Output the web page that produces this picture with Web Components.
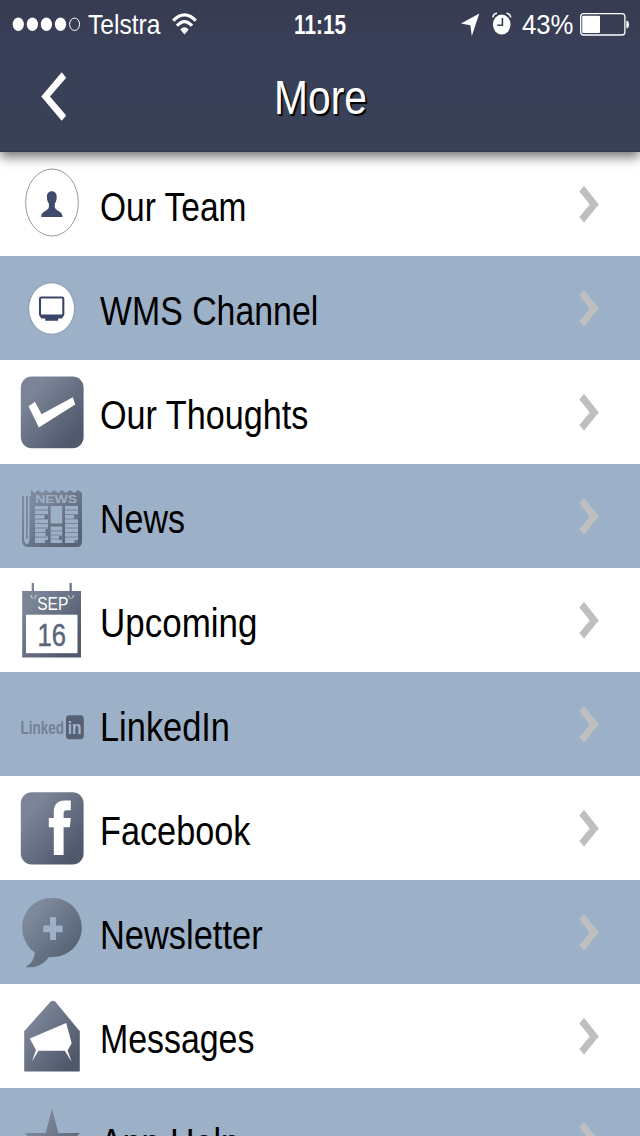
<!DOCTYPE html>
<html lang="en">
<head>
<meta charset="utf-8">
<title>More</title>
<style>
    body{
        margin: 0;
        background-color: white;
        font-family: "Liberation Sans", Arial, sans-serif;
    }
</style>
</head>
<body>
<more-screen></more-screen>

<script>
function makeTemplate(html){
    const template = document.createElement("template");
    template.innerHTML = html;
    return template;
}

// Squeezes its text horizontally into the given width
class FitText extends HTMLElement {
    static template = makeTemplate(`
        <style>
            :host{
                display: block;
                flex: none;
                white-space: nowrap;
            }

            span{
                display: inline-block;
                transform-origin: 0 50%;
            }
        </style>
        <span><slot></slot></span>
    `)

    constructor(){
        super();
        const shadow = this.attachShadow({mode: "open"});
        shadow.append(FitText.template.content.cloneNode(true));
        this.span = shadow.querySelector("span");
    }

    connectedCallback() {
        const width = Number(this.getAttribute("width"));
        const natural = this.span.getBoundingClientRect().width;
        this.style.width = width + "px";
        this.span.style.transform = `scaleX(${width / natural})`;
    }
}


class StatusBar extends HTMLElement {
    static template = makeTemplate(`
        <style>
            :host{
                display: grid;
                grid-template-columns: 1fr auto 1fr;
                height: 48px;
                line-height: 49px;
                font-size: 28.5px;
                color: white;
            }

            .group{
                display: flex;
            }

            .right{
                justify-content: flex-end;
            }

            .time{
                font-weight: bold;
                font-size: 27.5px;
            }

            svg{
                display: block;
                flex: none;
            }
        </style>
        <div class="group">
            <svg width="87.5" height="48" viewBox="0 0 87.5 48" fill="white">
                <ellipse cx="18.3" cy="24.3" rx="5.6" ry="6.8"/>
                <ellipse cx="32.4" cy="24.3" rx="5.6" ry="6.8"/>
                <ellipse cx="46.4" cy="24.3" rx="5.6" ry="6.8"/>
                <ellipse cx="60.5" cy="24.3" rx="5.6" ry="6.8"/>
                <ellipse cx="74.6" cy="24.3" rx="5" ry="6.2" fill="none" stroke="white" stroke-width="1"/>
            </svg>
            <fit-text width="72.5">Telstra</fit-text>
            <svg width="40" height="48" viewBox="160 0 40 48">
                <g fill="none" stroke="white" stroke-width="3.2">
                    <path d="M173.2 20.6Q184.5 9.2 195.8 20.6"/>
                    <path d="M177 25.8Q184.5 17.4 192 25.8"/>
                </g>
                <path d="M180.3 29.6Q184.5 25 188.7 29.6L184.5 34.6Z" fill="white"/>
            </svg>
        </div>
        <fit-text class="time" width="52">11:15</fit-text>
        <div class="group right">
            <svg width="62" height="48" viewBox="459 0 62 48">
                <path d="M478.3 13.5L470.8 36L469.3 25.3L460 23.6Z" fill="white"/>
                <ellipse cx="500.7" cy="24.6" rx="8.8" ry="10" fill="white"/>
                <path d="M491.8 17.3Q492.5 13.5 496 13.2M505.4 13.2Q509 13.5 509.8 17.3" fill="none" stroke="white" stroke-width="1.5"/>
                <path d="M501.4 18V25.2H496.3" fill="none" stroke="#394059" stroke-width="1.6"/>
            </svg>
            <fit-text width="51.5">43%</fit-text>
            <svg width="67" height="48" viewBox="573 0 67 48">
                <rect x="580.7" y="13.7" width="44.2" height="21.3" rx="3" fill="none" stroke="white" stroke-width="1.3"/>
                <rect x="582.2" y="15.7" width="17.8" height="17.4" rx="1" fill="white"/>
                <path d="M626.4 20.4Q629 21 629 24.4T626.4 28.4Z" fill="white"/>
            </svg>
        </div>
    `)

    constructor(){
        super();
        const shadow = this.attachShadow({mode: "open"});
        shadow.append(StatusBar.template.content.cloneNode(true));
    }
}


class NavHeader extends HTMLElement {
    static template = makeTemplate(`
        <style>
            :host{
                display: block;
                position: relative;
                z-index: 1;
                flex: none;
                height: 151.6px;
                box-sizing: border-box;
                border-bottom: 1px solid #34384c;
                background: linear-gradient(#373b51, #394159 40%, #394157);
                box-shadow: 0 5px 11px rgba(0, 0, 0, .55);
            }

            .bar{
                display: grid;
                grid-template-columns: 1fr auto 1fr;
                height: 98px;
                line-height: 98px;
                font-size: 49px;
                color: white;
                text-shadow: 2px 2px 1px black;
            }

            svg{
                display: block;
            }
        </style>
        <status-bar></status-bar>
        <div class="bar">
            <svg width="80" height="98" viewBox="0 48 80 98">
                <path d="M61.7 72.3L66.2 77.8L50 96.6L66.2 115.4L61.7 120.8L41.3 96.6Z" fill="white"/>
            </svg>
            <fit-text width="93"><slot></slot></fit-text>
        </div>
    `)

    constructor(){
        super();
        const shadow = this.attachShadow({mode: "open"});
        shadow.append(NavHeader.template.content.cloneNode(true));
    }
}


const icons = {
    team: `
        <ellipse cx="52" cy="50.5" rx="26.4" ry="33.5" fill="white" stroke="#8a8b98" stroke-width=".9"/>
        <path d="M51.8 39.2C48.6 39.2 46.6 41.8 46.9 45.6C47.1 48.3 47.8 50.3 48.9 51.6V55.2C48 59.3 41.2 58.5 41.2 65H62.6C62.6 58.5 55.6 59.3 54.8 55.2V51.6C55.9 50.3 56.5 48.3 56.7 45.6C57 41.8 55 39.2 51.8 39.2Z" fill="#3f4a6c"/>`,
    channel: `
        <ellipse cx="51.6" cy="52.5" rx="22.9" ry="25.7" fill="white" stroke="#71819a" stroke-width=".7"/>
        <rect x="40" y="41.5" width="23.3" height="18" rx="1.2" fill="none" stroke="#3b4568" stroke-width="2.1"/>
        <path d="M39.6 59.5H63.7L62 62.6H58.2V64.7H45.2V62.6H41.2Z" fill="#3b4568"/>`,
    thoughts: `
        <rect x="20.8" y="16.6" width="62.8" height="71.6" rx="11" fill="url(#steel)"/>
        <path d="M28.6 46.2L35 41.8L41.5 54.2L72.8 37.2L75.2 44.4L38.8 67.6Z" fill="white"/>`,
    news: `
        <g opacity=".88">
            <path d="M31 26L34.6 29L38 26L42 29L46 26L50 29L54 26L58 29L62 26L66 29L70 26L74 29L78 26L82 29V77Q82 83 77 83H28Q22 83 22 76V32H24V75Q24.5 80 27 80T29.5 75V32H31Z" fill="url(#steel)"/>
            <path d="M26.9 32V75" stroke="#687891" stroke-width="1.5"/>
            <g fill="#9db0c7">
                <path d="M35 42H48V79H35ZM50.7 42H62.2V59.5H50.7ZM50.7 62.5H62.2V79H50.7ZM65 42H78V79H65Z"/>
                <text x="35.2" y="39.4" font-size="11.5" font-weight="bold" textLength="42" lengthAdjust="spacingAndGlyphs">NEWS</text>
            </g>
            <path d="M35 46H48M35 50.5H48M35 55H48M35 59.5H48M35 64H48M35 68.5H48M35 73H48M50.7 67H62.2M50.7 71H62.2M50.7 75H62.2M65 46H78M65 50.5H78M65 55H78M65 59.5H78M65 64H78M65 68.5H78M65 73H78" stroke="#71819a" stroke-width="1"/>
            <path d="M44.5 51H48V55H44.5ZM45.5 65H48V72H45.5ZM59 72H62.2V76H59ZM74 51H78V55H74ZM74.5 76H78V79H74.5ZM45 76H48V79H45Z" fill="#5f6c82"/>
        </g>`,
    upcoming: `
        <path d="M31.7 15H34V23H69.5V15H71.8V23H81V89.5H22.2V23H31.7Z" fill="url(#steel)"/>
        <rect x="26" y="46.7" width="51.5" height="38.5" fill="white"/>
        <path d="M31 27Q31 30 33 30.5M36 27Q36 30 34 30.5M68.5 27Q68.5 30 70.5 30.5M73.5 27Q73.5 30 71.5 30.5" fill="none" stroke="#d5dae2" stroke-width="1"/>
        <text x="37.3" y="42.3" font-size="18.5" fill="white" textLength="31" lengthAdjust="spacingAndGlyphs">SEP</text>
        <text x="37.5" y="78.3" font-size="32" fill="#5a6579" stroke="#5a6579" stroke-width=".5" textLength="28.5" lengthAdjust="spacingAndGlyphs">16</text>`,
    linkedin: `
        <text transform="translate(20.6 62) scale(.73 1)" font-size="18.5" font-weight="bold" fill="#758196">Linked</text>
        <rect x="66" y="43.3" width="17.8" height="24" rx="3.5" fill="#566176"/>
        <text transform="translate(67.8 62.3) scale(.82 1)" font-size="19" font-weight="bold" fill="#a3b3c9">in</text>`,
    facebook: `
        <rect x="20.8" y="16.2" width="62.8" height="72.4" rx="11" fill="url(#steel)"/>
        <path d="M53.8 79V51.2H48.8V42H53.8V36C53.8 28.5 57.5 24.6 64.5 24.6H70.8V34.2H66.7C64.5 34.2 63.6 35.2 63.6 37.5V42H70.8L69.8 51.2H63.6V79Z" fill="white"/>`,
    newsletter: `
        <path d="M52 18C69 18 81.8 31 81.8 47.5C81.8 64 69 77 52 77H49C44 84 37 88 26.3 87.3C25.8 86.6 26.5 86 28 85.3C32 82.6 34.3 78 34.8 72.5C27 67 22.2 58 22.2 47.5C22.2 31 35 18 52 18Z" fill="url(#steel)" opacity=".92"/>
        <path d="M50 37H56V45.5H62.6V52.3H56V60H50V52.3H43.3V45.5H50Z" fill="#9db0c7"/>`,
    messages: `
        <path d="M50.5 17.7Q53 16 55.4 17.7L79.8 47.2V87.6H24.2V47.2Z" fill="url(#steel)"/>
        <path d="M29.8 54.5L66.2 39L71.7 59.2L67.6 66.5L71.5 77.5L64.8 66.7H38.5L32 77.5L36 66Z" fill="white"/>`,
    star: `
        <path d="M52 20.5L58.3 45H80L64 61L70 88L52 72L34 88L40 61L24.5 45H45.7Z" fill="url(#steel)" opacity=".92"/>`
};


class MenuRow extends HTMLElement {
    constructor(){
        super();
        this.attachShadow({mode: "open"});
    }

    connectedCallback() {
        const icon = icons[this.getAttribute("icon")];
        const width = this.getAttribute("text-width");
        this.shadowRoot.append(makeTemplate(`
            <style>
                :host{
                    display: flex;
                    height: 104.1px;
                    background-color: var(--row-color, white);
                }

                svg{
                    display: block;
                    flex: none;
                }

                fit-text{
                    box-sizing: border-box;
                    height: 104px;
                    padding-top: 3px;
                    line-height: 104px;
                    font-size: 40.7px;
                    color: black;
                }

                .arrow{
                    margin-left: auto;
                }
            </style>
            <svg width="100.2" height="104" viewBox="0 0 100.2 104">
                <defs>
                    <linearGradient id="steel" x1="0" y1="0" x2="1" y2="1">
                        <stop offset=".2" stop-color="#7b8597"/>
                        <stop offset=".85" stop-color="#4f596b"/>
                    </linearGradient>
                </defs>
                ${icon}
            </svg>
            <fit-text width="${width}"><slot></slot></fit-text>
            <svg class="arrow" width="70" height="104" viewBox="570 0 70 104">
                <path d="M584 33.8L579.3 39.5L589.8 52.5L579.3 65L584 70.6L598.8 52.5Z" fill="#bfbfbf"/>
            </svg>
        `).content);
    }
}


class MoreScreen extends HTMLElement {
    static template = makeTemplate(`
        <style>
            :host{
                display: flex;
                flex-direction: column;
                height: 1136px;
                overflow: hidden;
            }

            menu-row:nth-of-type(even){
                --row-color: #9cb0c7;
            }
        </style>
        <nav-header>More</nav-header>
        <main>
            <menu-row icon="team" text-width="146.5">Our Team</menu-row>
            <menu-row icon="channel" text-width="218.3">WMS Channel</menu-row>
            <menu-row icon="thoughts" text-width="208.4">Our Thoughts</menu-row>
            <menu-row icon="news" text-width="85">News</menu-row>
            <menu-row icon="upcoming" text-width="157.5">Upcoming</menu-row>
            <menu-row icon="linkedin" text-width="130">LinkedIn</menu-row>
            <menu-row icon="facebook" text-width="150.4">Facebook</menu-row>
            <menu-row icon="newsletter" text-width="162.6">Newsletter</menu-row>
            <menu-row icon="messages" text-width="154.4">Messages</menu-row>
            <menu-row icon="star" text-width="140">App Help</menu-row>
        </main>
    `)

    constructor(){
        super();
        const shadow = this.attachShadow({mode: "open"});
        shadow.append(MoreScreen.template.content.cloneNode(true));
    }
}

customElements.define("fit-text", FitText);
customElements.define("status-bar", StatusBar);
customElements.define("nav-header", NavHeader);
customElements.define("menu-row", MenuRow);
customElements.define("more-screen", MoreScreen);
</script>
</body>
</html>
